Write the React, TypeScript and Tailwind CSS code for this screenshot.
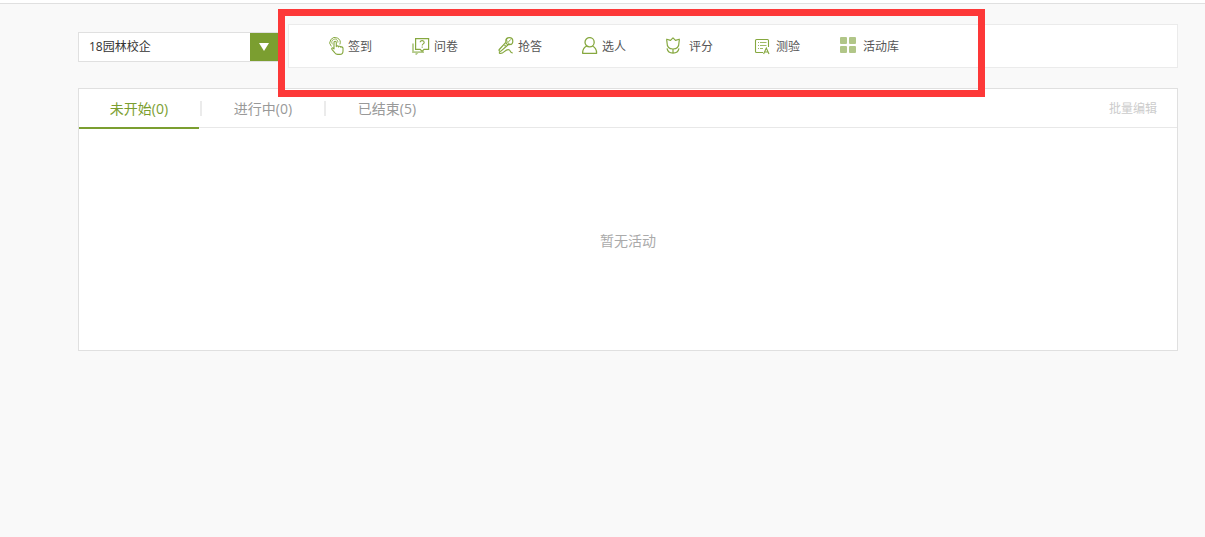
import { useState, type ReactNode } from "react";

const CheckInIcon = () => (
  <svg width="15" height="18" viewBox="0 0 15 18" fill="none" stroke="#86a83f" aria-hidden="true">
    <path d="M2.4 9.4A5.2 5.2 0 1 1 10.9 7.4" />
    <path d="M3.7 7.4A3.1 3.1 0 1 1 8.9 5.6" strokeWidth="0.8" />
    <path
      d="M5 12V5.4a1.1 1.1 0 0 1 2.3 0v4.2c0-1 2.3-1 2.3.3 0-1 2.2-.9 2.2.4 0-.8 2.2-.6 2.2.9v2.8c0 2.2-1.3 3.4-3.2 3.4H8.6c-1.4 0-2.1-.6-2.9-1.7L2.9 12.3c-.7-1.1.7-2 1.5-1Z"
      strokeWidth="1.1"
      strokeLinejoin="round"
    />
  </svg>
);

const SurveyIcon = () => (
  <svg width="18" height="18" viewBox="0 0 18 18" fill="none" aria-hidden="true">
    <path d="M1 6.5v8.7h3.4v1.6l1.6-1.6h6" stroke="#b4ca8b" strokeWidth="1.8" />
    <path d="M3.6 1.6h13v10.8h-4.6l-1.9 2-1.9-2H3.6Z" fill="#fff" stroke="#86a83f" strokeWidth="1.2" />
    <path d="M8.2 5.2c0-2.2 4-2 4 .2 0 1.5-2 1.4-2 3.1M10.2 9.4v1.3" stroke="#86a83f" strokeWidth="1.1" />
  </svg>
);

const AnswerIcon = () => (
  <svg width="16" height="18" viewBox="0 0 16 18" fill="none" stroke="#86a83f" strokeWidth="1.2" aria-hidden="true">
    <circle cx="11.3" cy="4.2" r="3.5" />
    <path d="M8.4 2.4c.4 2.8 2.2 4.7 5.1 5.2M10.4 5l2.4-2.6" strokeWidth="1" />
    <path d="m7.8 5.3-6.5 7.2c-.8.9.6 2.4 1.6 1.6l7.3-6.4M6.5 9.1l1.1-1.1" strokeLinejoin="round" />
    <path d="M1.4 14.4v1.8c1.8.5 3.4-.2 4.9-1.6 1.9-1.7 4.1-2.5 5.3-1.5 1.4 1.2.2 2.7 3.2 2.9" strokeWidth="1.1" />
  </svg>
);

const PickIcon = () => (
  <svg width="16" height="18" viewBox="0 0 16 18" fill="none" stroke="#86a83f" strokeWidth="1.3" aria-hidden="true">
    <circle cx="7.6" cy="5.2" r="4.6" />
    <path d="M4.9 9c-2.8 1.1-4.3 3.3-4.3 7.3h14c0-4-1.5-6.2-4.3-7.3" strokeLinejoin="round" />
  </svg>
);

const ScoreIcon = () => (
  <svg width="19" height="18" viewBox="0 0 19 18" fill="none" stroke="#86a83f" strokeWidth="1.2" aria-hidden="true">
    <path
      d="M7 .9 4.5 3.4.8 2.2C.5 3.5 1 4.1 1 5.5c0 4.2 2.1 6.5 6 6.5s6-2.3 6-6.5c0-1.4.5-2 .2-3.3L9.5 3.4Z"
      strokeLinejoin="round"
    />
    <path d="M7 12v4.3M1 11.4c.6 3.1 2.7 4.7 6 4.7s5.4-1.6 6-4.7" />
  </svg>
);

const QuizIcon = () => (
  <svg width="19" height="18" viewBox="0 0 19 18" fill="none" stroke="#86a83f" strokeWidth="1.1" aria-hidden="true">
    <path d="M10 15.5H3.5a1 1 0 0 1-1-1v-11a1 1 0 0 1 1-1h11a1 1 0 0 1 1 1V10" />
    <path d="M5 5.5h1M7 5.5h6.5M5 8.5h1M7 8.5h6.5M5 11.5h1M7 11.5h3" strokeWidth="0.8" />
    <path d="m10.6 16.9 2.7-5.9 2.7 5.9M11.6 15h3.4" />
  </svg>
);

const LibraryIcon = () => (
  <svg width="19" height="18" viewBox="0 0 19 18" fill="#b1c688" aria-hidden="true">
    <rect x="0" y="0" width="7" height="7" rx="1" />
    <rect x="9" y="0" width="7" height="7" rx="1" />
    <rect x="0" y="9" width="7" height="7" rx="1" />
    <rect x="9" y="9" width="7" height="7" rx="1" />
  </svg>
);

const tools: { label: string; icon: ReactNode }[] = [
  { label: "签到", icon: <CheckInIcon /> },
  { label: "问卷", icon: <SurveyIcon /> },
  { label: "抢答", icon: <AnswerIcon /> },
  { label: "选人", icon: <PickIcon /> },
  { label: "评分", icon: <ScoreIcon /> },
  { label: "测验", icon: <QuizIcon /> },
  { label: "活动库", icon: <LibraryIcon /> },
];

const tabs = ["未开始(0)", "进行中(0)", "已结束(5)"];

export default function App() {
  const [active, setActive] = useState(0);

  return (
    <div className="min-h-screen bg-[#f9f9f9] font-['Open_Sans','Noto_Sans_CJK_SC',sans-serif] text-xs text-[#555]">
      <header className="h-1 border-b border-[#e0e0e0] bg-white" />
      <main className="pt-5 pr-[27px] pl-[78px]">
        <div className="relative flex items-center gap-2.5">
          <div className="relative mt-0.5 w-[200px] shrink-0">
            <select
              aria-label="班级"
              className="block h-[30px] w-full appearance-none border border-[#e0e0e0] bg-white pr-8 pl-2.5 text-xs text-[#333] outline-none"
            >
              <option>18园林校企</option>
            </select>
            <span className="pointer-events-none absolute inset-y-px right-0 grid w-7 place-items-center bg-[#7b9e30]">
              <svg width="10" height="8" viewBox="0 0 10 8" fill="#fff" aria-hidden="true">
                <path d="M0 0h10L5 8Z" />
              </svg>
            </span>
          </div>
          <nav className="flex h-11 flex-1 items-center gap-10 border border-[#ebebeb] bg-white pl-10">
            {tools.map((tool) => (
              <button key={tool.label} type="button" className="flex items-center gap-1 whitespace-nowrap">
                {tool.icon}
                <span className="pt-0.5">{tool.label}</span>
              </button>
            ))}
          </nav>
          {/* highlight around the activity tools */}
          <div className="pointer-events-none absolute -top-[15px] left-[200px] h-[88px] w-[707px] border-[7px] border-[#fd3838]" />
        </div>

        <section className="mt-5 border border-[#e0e0e0] bg-white">
          <div className="flex h-[39px] items-center justify-between border-b border-[#e8e8e8] pr-5">
            <div className="flex items-center">
              {tabs.map((tab, i) => (
                <div key={tab} className="flex items-center">
                  {i > 0 && <span className="mx-px h-[15px] w-0.5 bg-[#ebebeb]" />}
                  <button
                    type="button"
                    onClick={() => setActive(i)}
                    className={
                      i === active
                        ? "-mb-0.5 h-10 w-[120px] border-b-2 border-[#7b9e30] pt-0.5 text-sm text-[#7b9e30]"
                        : "h-10 w-[120px] pt-0.5 text-sm text-[#999]"
                    }
                  >
                    {tab}
                  </button>
                </div>
              ))}
            </div>
            <button type="button" className="pt-0.5 text-[#ccc]">
              批量编辑
            </button>
          </div>
          <p className="flex h-[222px] items-center justify-center pt-1 text-sm text-[#aaa]">暂无活动</p>
        </section>
      </main>
    </div>
  );
}
